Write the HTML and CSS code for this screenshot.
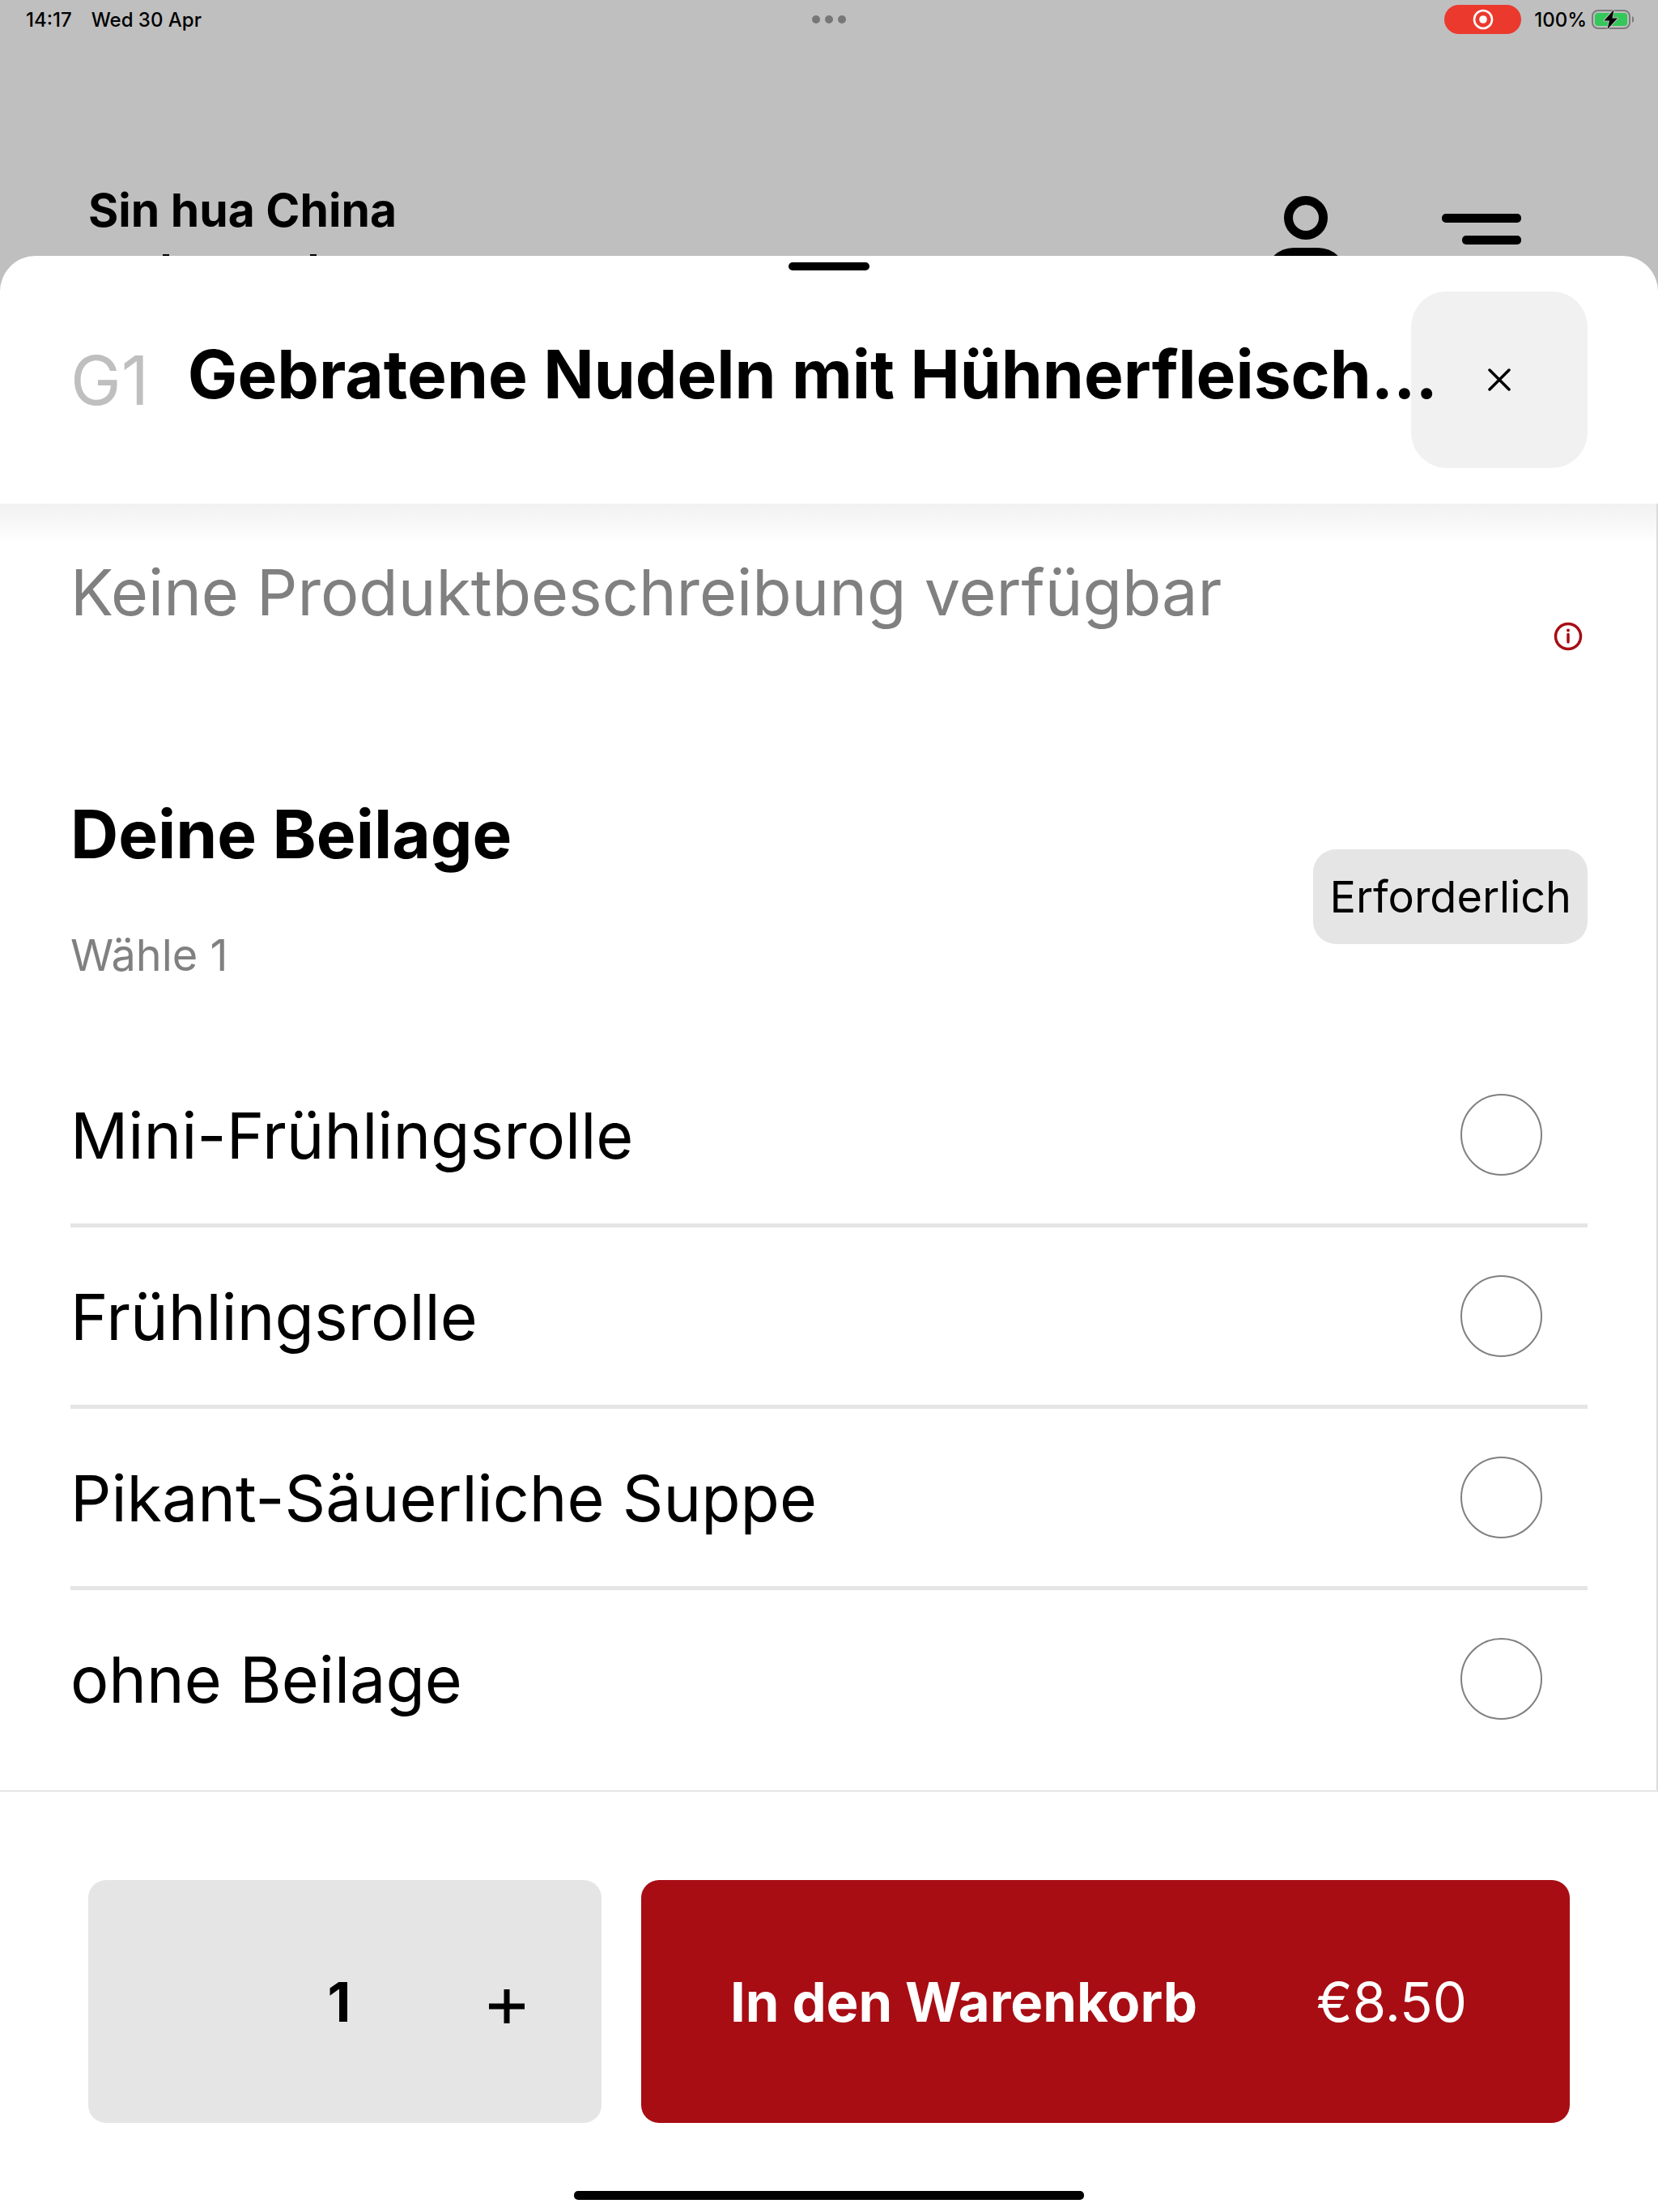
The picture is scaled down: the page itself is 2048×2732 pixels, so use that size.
FILE: index.html
```html
<!DOCTYPE html>
<html lang="de">
<head>
<meta charset="utf-8">
<meta name="viewport" content="width=device-width, initial-scale=1">
<title>Sin hua China</title>
<link rel="stylesheet" href="styles.css">
</head>
<body>
<div class="app">
  <div class="status-bar">
    <div class="status-left"><span>14:17</span><span>Wed 30 Apr</span></div>
    <div class="status-dots"><span class="dot"></span><span class="dot"></span><span class="dot"></span></div>
    <div class="status-right">
      <span class="record-pill">
        <svg width="26" height="26" viewBox="0 0 26 26" aria-hidden="true"><circle cx="13" cy="13" r="11" fill="none" stroke="#fff" stroke-width="2.6"/><circle cx="13" cy="13" r="4.8" fill="#fff"/></svg>
      </span>
      <span>100%</span>
      <svg class="battery" width="54" height="28" viewBox="0 0 54 28" aria-hidden="true">
        <rect x="1" y="3" width="46" height="22" rx="7" fill="none" stroke="#7c7c7c" stroke-width="2"/>
        <path d="M50 10c3 1 3 7 0 8z" fill="#7c7c7c"/>
        <rect x="4" y="6" width="40" height="16" rx="4" fill="#34c759"/>
        <path d="M27.500 2L15.500 15.500H22L19.500 26L32 12.500H25.500z" fill="#000" stroke="#bfbfbf" stroke-width="2" paint-order="stroke" stroke-linejoin="round"/>
      </svg>
    </div>
  </div>

  <header class="site-header">
    <div class="brand">
      <p class="brand-name">Sin hua China</p>
      <div class="brand-peek" aria-hidden="true"><span></span><span></span></div>
    </div>
    <nav class="site-nav">
      <button class="icon-button" type="button" aria-label="Konto">
        <svg width="84" height="78" viewBox="0 0 84 78" aria-hidden="true" fill="none" stroke="#000" stroke-width="11"><circle cx="42" cy="29" r="21.500"/><path d="M-3 101.500A30 30 0 0 1 27 71.500H57A30 30 0 0 1 87 101.500"/></svg>
      </button>
      <button class="icon-button" type="button" aria-label="Menü">
        <svg width="98" height="78" viewBox="0 0 98 78" aria-hidden="true"><rect x="0" y="24" width="98" height="11" rx="5"/><rect x="25" y="51" width="73" height="11" rx="5"/></svg>
      </button>
    </nav>
  </header>

  <main class="sheet">
    <div class="sheet-header">
      <span class="grabber"></span>
      <span class="item-code">G1</span>
      <h1 class="item-title">Gebratene Nudeln mit Hühnerfleisch…</h1>
      <button class="close-button" type="button" aria-label="Schließen">
        <svg width="28" height="28" viewBox="0 0 28 28" aria-hidden="true"><path d="M2 2L26 26M26 2L2 26" stroke="#000" stroke-width="3.500" stroke-linecap="round"/></svg>
      </button>
    </div>

    <div class="sheet-body">
      <div class="description">
        <p class="description-text">Keine Produktbeschreibung verfügbar</p>
        <button class="info-button" type="button" aria-label="Produktinformationen">
          <svg width="36" height="36" viewBox="0 0 36 36" aria-hidden="true"><circle cx="18" cy="18" r="15.500" fill="none" stroke="#a80d14" stroke-width="3.500"/><circle cx="18" cy="10.500" r="2" fill="#a80d14"/><path d="M18 15.500V25" stroke="#a80d14" stroke-width="3.500" stroke-linecap="round"/></svg>
        </button>
      </div>

      <section class="option-group">
        <div class="option-head">
          <div>
            <h2 class="option-title" id="beilage">Deine Beilage</h2>
            <p class="option-hint">Wähle 1</p>
          </div>
          <span class="badge">Erforderlich</span>
        </div>
        <div role="radiogroup" aria-labelledby="beilage">
          <label class="option"><span>Mini-Frühlingsrolle</span><input class="radio" type="radio" name="beilage"></label>
          <label class="option"><span>Frühlingsrolle</span><input class="radio" type="radio" name="beilage"></label>
          <label class="option"><span>Pikant-Säuerliche Suppe</span><input class="radio" type="radio" name="beilage"></label>
          <label class="option"><span>ohne Beilage</span><input class="radio" type="radio" name="beilage"></label>
        </div>
      </section>
    </div>

    <footer class="sheet-footer">
      <div class="actions">
        <div class="quantity">
          <span class="quantity-value">1</span>
          <button class="plus-button" type="button" aria-label="Mehr">
            <svg width="44" height="56" viewBox="0 0 44 56" aria-hidden="true"><path d="M22 13V55M0 34H44" stroke="#000" stroke-width="7"/></svg>
          </button>
        </div>
        <button class="cart-button" type="button"><span class="cart-label">In den Warenkorb</span><span>€8.50</span></button>
      </div>
      <div class="home-indicator"></div>
    </footer>
  </main>
</div>
</body>
</html>
```
FILE: styles.css
```css
* {
  box-sizing: border-box;
}

body,
h1,
h2,
p {
  margin: 0;
}

body {
  background: #bfbfbf;
  color: #000;
  font-family: Inter, "Liberation Sans", sans-serif;
}

button {
  padding: 0;
  border: 0;
  background: none;
  color: inherit;
  font: inherit;
  cursor: pointer;
}

svg {
  display: block;
}

.app {
  display: flex;
  flex-direction: column;
  min-height: 100vh;
}

.status-bar {
  display: grid;
  grid-template-columns: 1fr auto 1fr;
  align-items: center;
  height: 48px;
  padding: 0 28px;
  font-size: 24px;
  font-weight: 500;
}

.status-left,
.status-right,
.status-dots {
  display: flex;
  align-items: center;
}

.status-left {
  gap: 24px;
  padding-left: 4px;
}

.status-dots {
  gap: 6px;
}

.dot {
  width: 10px;
  height: 10px;
  border-radius: 50%;
  background: #777;
}

.status-right {
  justify-content: flex-end;
  gap: 6px;
}

.record-pill {
  display: flex;
  align-items: center;
  justify-content: center;
  width: 95px;
  height: 36px;
  margin-right: 10px;
  border-radius: 18px;
  background: #eb392e;
}

.site-header {
  display: flex;
  justify-content: space-between;
  height: 268px;
  padding: 174px 169px 0 109px;
  overflow: hidden;
}

.brand-name {
  font-size: 57px;
  font-weight: 700;
  line-height: 76px;
}

.brand-peek {
  display: flex;
  gap: 174px;
  padding: 16px 0 0 92px;
}

.brand-peek span {
  width: 8px;
  height: 8px;
  background: #000;
}

.site-nav {
  display: flex;
  gap: 126px;
  padding-top: 18px;
}

.icon-button {
  display: flex;
}

.sheet {
  display: flex;
  flex: 1;
  flex-direction: column;
  border-radius: 44px 44px 0 0;
  background: #fff;
}

.sheet-header {
  position: relative;
  display: flex;
  align-items: center;
  padding: 44px 87px;
}

.grabber {
  position: absolute;
  top: 8px;
  left: 50%;
  width: 100px;
  height: 10px;
  border-radius: 5px;
  background: #000;
  transform: translateX(-50%);
}

.item-code {
  margin-right: 48px;
  color: #bfbfbf;
  font-size: 84px;
}

.item-title {
  position: relative;
  z-index: 1;
  flex: 1;
  min-width: 0;
  padding-bottom: 12px;
  font-size: 82px;
  font-weight: 700;
  line-height: 104px;
  white-space: nowrap;
}

.close-button {
  display: flex;
  flex: none;
  align-items: center;
  justify-content: center;
  width: 218px;
  height: 218px;
  border-radius: 44px;
  background: #f1f1f1;
}

.sheet-body {
  flex: 1;
  padding: 57px 85px 0 87px;
  border-right: 2px solid #dcdcdc;
  background: linear-gradient(#f1f1f1, #fff 50px);
}

.description {
  display: flex;
  align-items: flex-end;
  justify-content: space-between;
  height: 125px;
}

.description-text {
  align-self: flex-start;
  color: #808080;
  font-size: 79px;
  line-height: 104px;
}

.info-button {
  margin-right: 6px;
}

.option-group {
  padding-top: 175px;
}

.option-head {
  display: flex;
  align-items: center;
  justify-content: space-between;
  padding-bottom: 75px;
}

.option-title {
  font-size: 82px;
  font-weight: 700;
  line-height: 104px;
}

.option-hint {
  margin-top: 60px;
  color: #808080;
  font-size: 54px;
  line-height: 74px;
}

.badge {
  margin-top: 18px;
  padding: 0 20px;
  border-radius: 28px;
  background: #e5e5e5;
  font-size: 54px;
  line-height: 117px;
}

.option {
  display: flex;
  align-items: center;
  justify-content: space-between;
  height: 224px;
  padding-right: 56px;
  border-bottom: 5px solid #e5e5e5;
  font-size: 79px;
}

.option:last-child {
  border-bottom-color: transparent;
}

.radio {
  width: 101px;
  height: 101px;
  margin: 0;
  border: 2px solid #808080;
  border-radius: 50%;
  appearance: none;
}

.radio:checked {
  border: 30px solid #a80d14;
}

.sheet-footer {
  padding: 109px 109px 15px;
  border-top: 2px solid #e5e5e5;
}

.actions {
  display: grid;
  grid-template-columns: 634fr 1147fr;
  gap: 49px;
  height: 300px;
}

.quantity {
  display: grid;
  grid-template-columns: 1fr 1fr 1fr;
  align-items: center;
  justify-items: center;
  padding-right: 14px;
  border-radius: 22px;
  background: #e5e5e5;
  font-size: 67px;
}

.quantity-value {
  grid-column: 2;
  font-weight: 700;
}

.cart-button {
  display: flex;
  align-items: center;
  justify-content: space-between;
  padding: 0 127px 0 110px;
  border-radius: 22px;
  background: #a80d14;
  color: #fff;
  font-size: 67px;
}

.cart-label {
  font-weight: 700;
}

.home-indicator {
  width: 630px;
  height: 11px;
  margin: 84px auto 0;
  border-radius: 5px;
  background: #000;
}
```
